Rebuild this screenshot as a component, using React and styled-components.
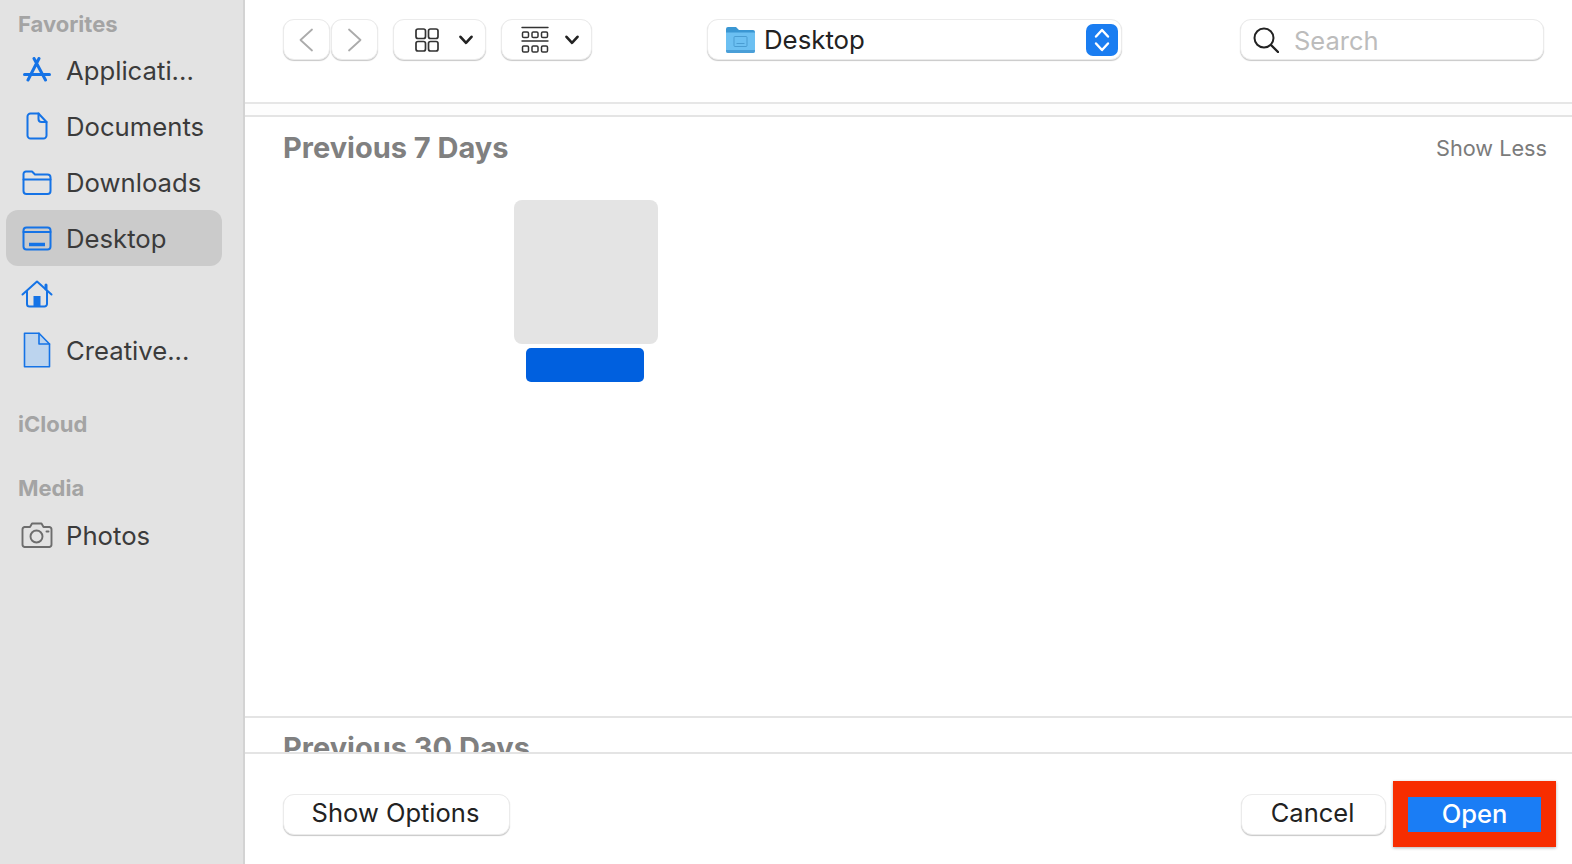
import React from "react";
import styled, { createGlobalStyle } from "styled-components";

const GlobalStyle = createGlobalStyle`
  html, body {
    margin: 0;
    padding: 0;
    background: #fff;
    font-family: Inter, "Liberation Sans", sans-serif;
  }
  * {
    box-sizing: border-box;
  }
`;

const Icon = ({ w, h, children, color = "#1573e6", sw = 2 }) => (
  <svg
    width={w}
    height={h}
    viewBox={`0 0 ${w} ${h}`}
    fill="none"
    stroke={color}
    strokeWidth={sw}
    strokeLinecap="round"
    strokeLinejoin="round"
  >
    {children}
  </svg>
);

const AppsIcon = () => (
  <Icon w={28} h={26} sw={3}>
    <path d="M11 1.500L22.500 23M16 1.500L5 23" />
    <path d="M1.500 17.500H26.500" />
  </Icon>
);

const DocIcon = () => (
  <Icon w={22} h={28}>
    <path d="M5 1.500h7.500L20.500 10v13.500a3 3 0 0 1-3 3h-13a3 3 0 0 1-3-3v-19a3 3 0 0 1 3-3z" />
    <path d="M12.500 1.500V7a3 3 0 0 0 3 3h5" />
  </Icon>
);

const FolderIcon = () => (
  <Icon w={30} h={25}>
    <path d="M1.500 7V4a2.500 2.500 0 0 1 2.500-2.500h6l3 3h12.500a3 3 0 0 1 3 3V21a3 3 0 0 1-3 3H4.500a3 3 0 0 1-3-3z" />
    <path d="M1.500 9.500h27" />
  </Icon>
);

const DesktopIcon = () => (
  <Icon w={30} h={25}>
    <rect x="1.500" y="1.500" width="27" height="22" rx="3" />
    <path d="M1.500 6h27" />
    <path d="M7 18.500h16" strokeWidth="3.500" strokeLinecap="butt" />
  </Icon>
);

const HomeIcon = () => (
  <Icon w={32} h={28}>
    <path d="M1.500 14.500L16 1.500l14.500 13" />
    <path d="M25 5V9" strokeWidth="3" />
    <path d="M6 11.500V24a2.500 2.500 0 0 0 2.500 2.500h15A2.500 2.500 0 0 0 26 24V11.500" />
    <rect x="12.500" y="16" width="7" height="10.500" fill="#1573e6" stroke="none" />
  </Icon>
);

const FileIcon = () => (
  <Icon w={28} h={36} sw={1.6}>
    <path d="M1.500 1.200h14.500L26.500 12v22.800h-25z" fill="#bcd4ee" />
    <path d="M16 1.200V12h10.500" />
  </Icon>
);

const CameraIcon = () => (
  <Icon w={32} h={26} color="#6d6d6d" sw={1.9}>
    <path d="M3.500 5h5.500l2-3.500h9.500l2 3.500h6a2.500 2.500 0 0 1 2 2.500v15a2.500 2.500 0 0 1-2 2.500H3.500a2.500 2.500 0 0 1-2-2.500v-15a2.500 2.500 0 0 1 2-2.500z" />
    <circle cx="15.500" cy="14.500" r="6" />
    <path d="M25.500 9.500h2" />
  </Icon>
);

const BackIcon = () => (
  <Icon w={15} h={24} color="#ababab" sw={1.8}>
    <path d="M13 1.500L1.500 12 13 22.500" />
  </Icon>
);

const ForwardIcon = () => (
  <Icon w={15} h={24} color="#ababab" sw={1.8}>
    <path d="M2 1.500L13.500 12 2 22.500" />
  </Icon>
);

const GridIcon = () => (
  <Icon w={24} h={24} color="#333" sw={1.7}>
    <rect x="1" y="1" width="9.500" height="9.500" rx="2" />
    <rect x="13.500" y="1" width="9.500" height="9.500" rx="2" />
    <rect x="1" y="13.500" width="9.500" height="9.500" rx="2" />
    <rect x="13.500" y="13.500" width="9.500" height="9.500" rx="2" />
  </Icon>
);

const GalleryIcon = () => (
  <Icon w={28} h={28} color="#333" sw={1.5}>
    <path d="M1 1.500h26M1 15h26" strokeWidth="1.400" />
    <rect x="1.500" y="6" width="6" height="5.500" rx="1.300" />
    <rect x="11" y="6" width="6" height="5.500" rx="1.300" />
    <rect x="20.500" y="6" width="6" height="5.500" rx="1.300" />
    <rect x="1.500" y="20" width="6" height="6" rx="1.300" />
    <rect x="11" y="20" width="6" height="6" rx="1.300" />
    <rect x="20.500" y="20" width="6" height="6" rx="1.300" />
  </Icon>
);

const ChevronIcon = () => (
  <Icon w={14} h={10} color="#222" sw={2.600}>
    <path d="M1.500 1.800L7 7.800l5.500-6" />
  </Icon>
);

const StepperIcon = () => (
  <Icon w={16} h={26} color="#fff" sw={2.400}>
    <path d="M2 9.500l6-6.500 6 6.500M2 16.500l6 6.500 6-6.500" />
  </Icon>
);

const SearchIcon = () => (
  <Icon w={26} h={26} color="#222" sw={2}>
    <circle cx="11" cy="11" r="9.500" />
    <path d="M18 18l7 7" strokeWidth="2.400" />
  </Icon>
);

const DesktopFolder = () => (
  <svg width="29" height="27" viewBox="0 0 29 27">
    <path d="M0 3a2 2 0 0 1 2-2h8l3 3h14a2 2 0 0 1 2 2v6H0z" fill="#3a97d3" />
    <path d="M0 6.500h29V25a2 2 0 0 1-2 2H2a2 2 0 0 1-2-2z" fill="#6cc0f2" />
    <path d="M0 24h29v1a2 2 0 0 1-2 2H2a2 2 0 0 1-2-2z" fill="#4a9fd8" />
    <rect x="8" y="10.500" width="13" height="10" rx="1" fill="none" stroke="#4a9dd2" />
    <path d="M10.500 17.500h8" stroke="#4a9dd2" />
  </svg>
);

const favorites = [
  { icon: <AppsIcon />, label: "Applicati..." },
  { icon: <DocIcon />, label: "Documents" },
  { icon: <FolderIcon />, label: "Downloads" },
  { icon: <DesktopIcon />, label: "Desktop", active: true },
  { icon: <HomeIcon />, label: "" },
  { icon: <FileIcon />, label: "Creative..." },
];

const App = () => {
  return (
    <Window>
      <GlobalStyle />
      <Sidebar>
        <SideHeading>Favorites</SideHeading>
        {favorites.map((item, i) => (
          <SideRow key={i} $active={item.active}>
            <SideIcon>{item.icon}</SideIcon>
            {item.label}
          </SideRow>
        ))}
        <SideHeading $gap={26}>iCloud</SideHeading>
        <SideHeading $gap={26}>Media</SideHeading>
        <SideRow $gap={1}>
          <SideIcon>
            <CameraIcon />
          </SideIcon>
          Photos
        </SideRow>
      </Sidebar>

      <Main>
        <Toolbar>
          <NavPair>
            <ToolButton $width={47}>
              <BackIcon />
            </ToolButton>
            <ToolButton $width={47}>
              <ForwardIcon />
            </ToolButton>
          </NavPair>
          <ViewButton $width={93} $gap={20} $shift={9}>
            <GridIcon />
            <ChevronIcon />
          </ViewButton>
          <ViewButton $width={91} $gap={16} $shift={6}>
            <GalleryIcon />
            <ChevronIcon />
          </ViewButton>
          <PathPopup>
            <DesktopFolder />
            <PathName>Desktop</PathName>
            <Stepper>
              <StepperIcon />
            </Stepper>
          </PathPopup>
          <SearchField>
            <SearchIcon />
            <SearchText>Search</SearchText>
          </SearchField>
        </Toolbar>
        <HeaderStrip />

        <Content>
          <Section $height={601}>
            <SectionHead $height={60}>
              <SectionTitle>Previous 7 Days</SectionTitle>
              <ShowLess>Show Less</ShowLess>
            </SectionHead>
            <FileGrid>
              <FileItem>
                <Thumb />
                <FileLabel />
              </FileItem>
            </FileGrid>
          </Section>
          <Section>
            <SectionHead $height={58}>
              <SectionTitle>Previous 30 Days</SectionTitle>
            </SectionHead>
          </Section>
        </Content>

        <Footer>
          <PushButton $width={227}>Show Options</PushButton>
          <FooterRight>
            <PushButton $width={145}>Cancel</PushButton>
            <Highlight>
              <OpenButton>Open</OpenButton>
            </Highlight>
          </FooterRight>
        </Footer>
      </Main>
    </Window>
  );
};

export default App;

const Window = styled.div`
  display: flex;
  width: 1572px;
  height: 864px;
  overflow: hidden;
  background: #fff;
`;

const Sidebar = styled.aside`
  width: 245px;
  flex-shrink: 0;
  padding-top: 4px;
  background: #e3e3e3;
  border-right: 2px solid #d3d3d3;
`;

const SideHeading = styled.div`
  height: 38px;
  margin-top: ${(props) => props.$gap || 0}px;
  padding-left: 18px;
  line-height: 40px;
  font-size: 22px;
  font-weight: 700;
  color: #a4a4a4;
`;

const SideRow = styled.div`
  display: flex;
  align-items: center;
  gap: 13px;
  width: 216px;
  height: 56px;
  margin-top: ${(props) => props.$gap || 0}px;
  margin-left: 6px;
  padding-left: 15px;
  border-radius: 12px;
  font-size: 25.700px;
  color: #3b3b3b;
  background: ${(props) => (props.$active ? "#cbcbcb" : "transparent")};
`;

const SideIcon = styled.span`
  display: flex;
  align-items: center;
  justify-content: center;
  width: 32px;
  height: 36px;
  flex-shrink: 0;
`;

const Main = styled.main`
  flex: 1;
  min-width: 0;
  display: flex;
  flex-direction: column;
`;

const Toolbar = styled.header`
  display: flex;
  align-items: flex-start;
  gap: 15px;
  height: 104px;
  padding: 19px 28px 0 38px;
  border-bottom: 2px solid #e6e6e6;
`;

const NavPair = styled.div`
  display: flex;
  gap: 1px;
`;

const ToolButton = styled.div`
  display: flex;
  align-items: center;
  justify-content: center;
  width: ${(props) => props.$width}px;
  height: 41px;
  background: #fff;
  border: 1px solid #ebebeb;
  border-radius: 11px;
  box-shadow: 0 1px 1px rgba(0, 0, 0, 0.22);
`;

const ViewButton = styled(ToolButton)`
  gap: ${(props) => props.$gap}px;
  padding-top: 1px;
  padding-left: ${(props) => props.$shift}px;
`;

const PathPopup = styled(ToolButton)`
  justify-content: flex-start;
  width: 415px;
  margin-left: 100px;
  padding: 0 3px 0 18px;
`;

const PathName = styled.span`
  flex: 1;
  margin-left: 9px;
  padding-bottom: 1px;
  font-size: 25.800px;
  color: #222;
`;

const Stepper = styled.span`
  display: flex;
  align-items: center;
  justify-content: center;
  width: 32px;
  height: 32px;
  border-radius: 7px;
  background: #1a7df1;
`;

const SearchField = styled(ToolButton)`
  justify-content: flex-start;
  width: 304px;
  margin-left: 103px;
  padding-left: 12px;
`;

const SearchText = styled.span`
  margin-left: 15px;
  padding-top: 2px;
  font-size: 25.500px;
  color: #bcbcbc;
`;

const HeaderStrip = styled.div`
  height: 11px;
  flex-shrink: 0;
  background: #fdfdfd;
`;

const Content = styled.div`
  flex: 1;
  min-height: 0;
  overflow: hidden;
`;

const Section = styled.section`
  height: ${(props) => (props.$height ? `${props.$height}px` : "auto")};
  border-top: 2px solid #e4e4e4;
`;

const SectionHead = styled.div`
  display: flex;
  align-items: center;
  justify-content: space-between;
  height: ${(props) => props.$height}px;
  padding: 0 25px 0 38px;
`;

const SectionTitle = styled.h2`
  margin: 0;
  font-size: 29px;
  font-weight: 700;
  color: #808080;
`;

const ShowLess = styled.span`
  padding-top: 1px;
  font-size: 21.700px;
  color: #7b7b7b;
`;

const FileGrid = styled.div`
  display: flex;
  padding: 23px 0 0 269px;
`;

const FileItem = styled.div`
  display: flex;
  flex-direction: column;
  align-items: center;
  gap: 4px;
  width: 144px;
`;

const Thumb = styled.div`
  width: 144px;
  height: 144px;
  border-radius: 8px;
  background: #e4e4e4;
`;

const FileLabel = styled.div`
  width: 118px;
  height: 34px;
  margin-right: 2px;
  border-radius: 5px;
  background: #0060df;
`;

const Footer = styled.footer`
  display: flex;
  align-items: center;
  justify-content: space-between;
  height: 112px;
  flex-shrink: 0;
  padding: 27px 16px 17px 38px;
  border-top: 2px solid #e4e4e4;
`;

const FooterRight = styled.div`
  display: flex;
  align-items: center;
  gap: 7px;
`;

const PushButton = styled(ToolButton)`
  width: ${(props) => props.$width}px;
  padding: 0 2px 3px 0;
  font-size: 25.500px;
  color: #222;
`;

const Highlight = styled.div`
  padding: 16px 15px 15px;
  background: #f72d00;
  box-shadow: 0 1px 3px rgba(0, 0, 0, 0.3);
`;

const OpenButton = styled.div`
  display: flex;
  align-items: center;
  justify-content: center;
  width: 133px;
  height: 35px;
  padding-bottom: 3px;
  font-size: 25.500px;
  font-weight: 500;
  color: #fff;
  background: #1a7df5;
`;
